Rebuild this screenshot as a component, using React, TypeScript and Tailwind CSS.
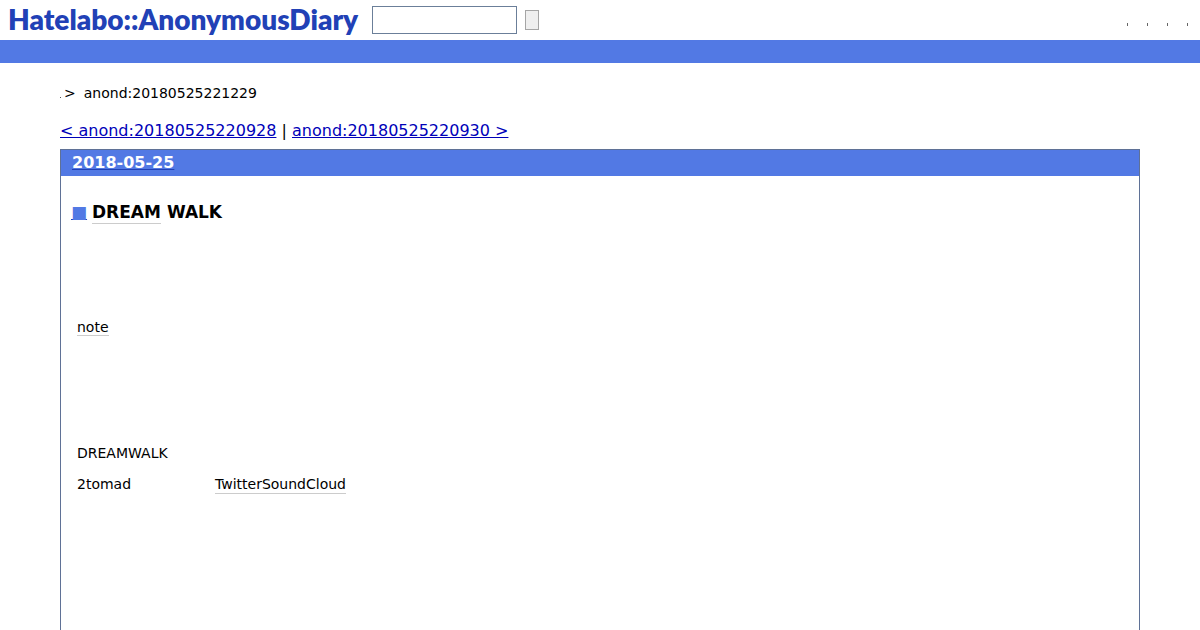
const DEJAVU = "font-['DejaVu_Sans',sans-serif]";

export default function App() {
  return (
    <div className={`h-[630px] w-[1200px] overflow-hidden bg-white ${DEJAVU} text-black`}>
      {/* header */}
      <header className="flex h-10 items-center">
        <a className="ml-2 -mt-[2px] w-[350px] whitespace-nowrap font-['Lato',sans-serif] text-[28px] font-extrabold leading-10 tracking-[0px] text-[#2141b6]">
          Hatelabo::AnonymousDiary
        </a>
        <input className="ml-[14px] h-7 w-[145px] border border-[#6b7f99] bg-white" />
        <button className="ml-2 h-5 w-[14px] border border-[#a5a5a5] bg-[#efefef]" />
        <div className="ml-auto mr-3 flex gap-[19px] pt-2">
          {[0, 1, 2, 3].map((i) => (
            <span key={i} className="h-[3px] w-px bg-[#666]" />
          ))}
        </div>
      </header>
      <div className="h-[23px] bg-[#5279e4]" />

      <main className="px-[60px]">
        {/* breadcrumb */}
        <div className="mt-[21px] flex h-[18px] items-center text-sm leading-[18px]">
          <span className="mt-2 h-px w-px bg-[#555]" />
          <span className="ml-[3px]">&gt;</span>
          <span className="ml-[8px]">anond:20180525221229</span>
        </div>

        {/* prev / next */}
        <div className="mt-[19px] h-[19px] text-base leading-[19px]">
          <a className="text-[#0000b8] underline">&lt; anond:20180525220928</a>
          {" | "}
          <a className="text-[#0000b8] underline">anond:20180525220930 &gt;</a>
        </div>

        {/* day box */}
        <section className="mt-[9px] h-[500px] border border-b-0 border-[#5f7196]">
          <h2 className="h-[26px] bg-[#5279e4] pl-[11px] text-base font-bold leading-[26px] text-white">
            <a className="underline decoration-[#2141b6]">2018-05-25</a>
          </h2>

          <h3 className="mt-[26px] flex h-[21px] items-baseline pl-[10px] text-[17px] font-bold leading-[21px]">
            <a className="w-4 text-center text-[#5279e4] underline decoration-[#2141b6]">■</a>
            <span className="ml-[5px] border-b border-[#ccc]">DREAM</span>
            <span className="ml-[6px]">WALK</span>
          </h3>

          <div className="pl-4 text-sm leading-[18px]">
            <p className="mt-[95px]">
              <span className="border-b border-[#ccc]">note</span>
            </p>
            <p className="mt-[108px]">DREAMWALK</p>
            <p className="mt-[13px] flex">
              <span className="w-[138px]">2tomad</span>
              <span className="border-b border-[#ccc]">TwitterSoundCloud</span>
            </p>
          </div>
        </section>
      </main>
    </div>
  );
}
